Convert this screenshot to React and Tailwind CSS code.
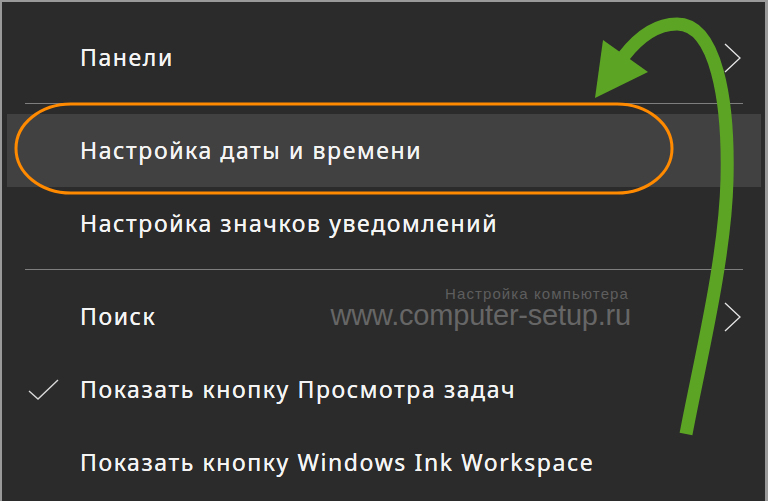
import React from 'react';

const Chevron = () => (
  <svg width="18" height="30" viewBox="0 0 18 30" className="shrink-0">
    <path d="M1 1 L16 15 L1 29" fill="none" stroke="#e6e6e6" strokeWidth="1.3" />
  </svg>
);

const Check = () => (
  <svg width="32" height="22" viewBox="0 0 32 22">
    <path d="M1 12 L10 20 L30 1" fill="none" stroke="#d9d9d9" strokeWidth="1.4" />
  </svg>
);

const Row = ({ label, chevron, checked, active }) => (
  <div className={`h-[73px] flex items-center ${active ? 'bg-[#414141] ml-[5px] mr-[4px]' : ''}`}>
    <div className={`${active ? 'w-[73px]' : 'w-[78px]'} flex items-center justify-end pr-[20px]`}>
      {checked && <Check />}
    </div>
    <span className="flex-1 text-[23px] tracking-[1.6px] text-[#f4f4f4] [text-shadow:0_0_0.4px_#fff]">{label}</span>
    {chevron && (
      <div className="w-[41px]">
        <Chevron />
      </div>
    )}
  </div>
);

const Separator = () => (
  <div className="h-[20px] pt-[9px] pl-[23px] pr-[22px]">
    <div className="h-px bg-[#7e7e7e]" />
  </div>
);

export default function App() {
  return (
    <div
      className="relative w-[768px] h-[501px] overflow-hidden bg-[#2b2b2b] border-t-2 border-l-2 border-r-[3px] border-[#9a9a9a]"
      style={{ fontFamily: '"Noto Sans", "Open Sans", sans-serif' }}
    >
      <div className="pt-[19px]">
        <Row label="Панели" chevron />
        <Separator />
        <Row label="Настройка даты и времени" active />
        <Row label="Настройка значков уведомлений" />
        <Separator />
        <Row label="Поиск" chevron />
        <Row label="Показать кнопку Просмотра задач" checked />
        <Row label="Показать кнопку Windows Ink Workspace" />
      </div>

      {/* watermark */}
      <div
        className="absolute left-[321px] top-[285px] w-[308px] text-right text-[#666666]"
        style={{ fontFamily: '"Liberation Sans", Arial, sans-serif' }}
      >
        <div className="text-[15px] leading-[13px] tracking-[1.1px] pr-[2px] text-[#5e5e5e]">Настройка компьютера</div>
        <div className="text-[29px] leading-[30px] tracking-[-0.2px]">www.computer-setup.ru</div>
      </div>

      {/* annotation */}
      <svg className="absolute -left-[2px] -top-[2px]" width="768" height="501" viewBox="0 0 768 501">
        <rect x="16" y="104" width="656" height="89" rx="55" ry="45" fill="none" stroke="#ff8a00" strokeWidth="3" />
        <path
          d="M686 434 C700 360 725 260 727 180 C729 100 716 24 677 24 C655 24 638 38 624 56"
          fill="none"
          stroke="#5ca524"
          strokeWidth="13"
        />
        <polygon points="603,40 648,72 595,98" fill="#5ca524" />
      </svg>
    </div>
  );
}
